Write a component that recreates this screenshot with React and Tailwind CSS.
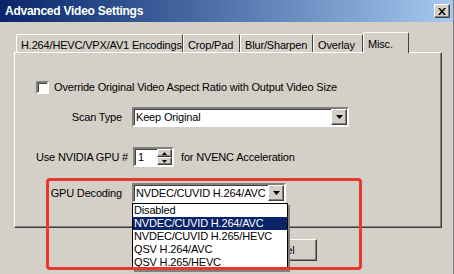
const raised =
  'border border-t-white border-l-white border-r-[#404040] border-b-[#404040] shadow-[inset_-1px_-1px_0_#808080]';
const sunken =
  'border-2 border-t-[#808080] border-l-[#808080] border-r-white border-b-white shadow-[inset_1px_1px_0_#404040]';

function DropArrow() {
  return (
    <div className={`flex h-[16px] w-[16px] flex-shrink-0 items-center justify-center bg-[#d4d0c8] ${raised}`}>
      <svg viewBox="0 0 7 4" className="h-[4px] w-[7px]">
        <path d="M0 0h7L3.5 4z" fill="#000" />
      </svg>
    </div>
  );
}

function Combo({ value, width }) {
  return (
    <div className={`flex h-[20px] items-center bg-white pl-[2px] ${sunken}`} style={{ width }}>
      <span className="flex-1 overflow-hidden whitespace-nowrap">{value}</span>
      <DropArrow />
    </div>
  );
}

function Tab({ label, width, active }) {
  return (
    <div
      className={
        'flex items-start whitespace-nowrap rounded-t-[2px] border-l border-t border-r border-l-white border-t-white border-r-[#404040] pl-[4px] ' +
        (active ? 'relative z-10 -mb-[1px] h-[21px] bg-[#d4d0c8] pt-[3px]' : 'h-[18px] pt-[2px]')
      }
      style={{ width }}
    >
      {label}
    </div>
  );
}

const items = [
  'Disabled',
  'NVDEC/CUVID H.264/AVC',
  'NVDEC/CUVID H.265/HEVC',
  'QSV H.264/AVC',
  'QSV H.265/HEVC',
];

export default function App() {
  return (
    <div className="relative h-[274px] w-[454px] overflow-hidden border-r border-r-[#808080] bg-[#d4d0c8] font-['Liberation_Sans',Arial,sans-serif] text-[11px] tracking-[-0.17px] text-black">
      {/* title bar */}
      <div className="flex h-[22px] items-center justify-between bg-gradient-to-r from-[#0a246a] to-[#a6caf0] pl-[5px] pr-[3px]">
        <span className="text-[12px] font-bold tracking-[-0.25px] text-white">Advanced Video Settings</span>
        <div className={`flex h-[14px] w-[16px] items-center justify-center bg-[#d4d0c8] ${raised}`}>
          <svg viewBox="0 0 8 7" className="h-[7px] w-[8px]">
            <path d="M0 0h2l2 2.5L6 0h2L5 3.5 8 7H6L4 4.5 2 7H0l3-3.5z" fill="#000" />
          </svg>
        </div>
      </div>

      {/* tabs */}
      <div className="ml-[16px] mt-[10px] flex h-[20px] items-end">
        <Tab label="H.264/HEVC/VPX/AV1 Encodings" width={167} />
        <Tab label="Crop/Pad" width={57} />
        <Tab label="Blur/Sharpen" width={73} />
        <Tab label="Overlay" width={50} />
        <Tab label="Misc." width={46} active />
      </div>

      {/* panel */}
      <div className="ml-[14px] flex h-[176px] w-[428px] flex-col border border-t-white border-l-white border-r-[#404040] border-b-[#404040] shadow-[inset_-1px_-1px_0_#808080]">
        <div className="ml-[21px] mt-[28px] flex h-[13px] items-center gap-[5px]">
          <div className={`h-[13px] w-[13px] bg-white ${sunken}`} />
          <span>Override Original Video Aspect Ratio with Output Video Size</span>
        </div>

        <div className="mt-[13px] flex items-center">
          <span className="w-[117px] pr-[10px] text-right">Scan Type</span>
          <Combo value="Keep Original" width={217} />
        </div>

        <div className="ml-[21px] mt-[20px] flex items-center">
          <span className="w-[97px]">Use NVIDIA GPU #</span>
          <div className={`flex h-[20px] w-[41px] items-center bg-white pl-[3px] ${sunken}`}>
            <span className="flex-1">1</span>
            <div className="flex h-[16px] w-[15px] flex-col">
              <div className={`flex h-[8px] items-center justify-center bg-[#d4d0c8] ${raised}`}>
                <svg viewBox="0 0 5 3" className="h-[3px] w-[5px]"><path d="M0 3h5L2.5 0z" fill="#000" /></svg>
              </div>
              <div className={`flex h-[8px] items-center justify-center bg-[#d4d0c8] ${raised}`}>
                <svg viewBox="0 0 5 3" className="h-[3px] w-[5px]"><path d="M0 0h5L2.5 3z" fill="#000" /></svg>
              </div>
            </div>
          </div>
          <span className="ml-[7px]">for NVENC Acceleration</span>
        </div>

        <div className="mt-[16px] flex items-center">
          <span className="w-[117px] pr-[10px] text-right">GPU Decoding</span>
          <Combo value="NVDEC/CUVID H.264/AVC" width={154} />
        </div>
      </div>

      {/* buttons below */}
      <div className="ml-[239px] mt-[11px] flex">
        <div className={`flex h-[22px] w-[78px] items-center justify-center ${raised}`}>Cancel</div>
      </div>

      {/* open dropdown list */}
      <div className="absolute left-[132px] top-[203px] w-[156px] border border-black bg-white shadow-[2px_2px_0_#808080]">
        {items.map((t, i) => (
          <div
            key={t}
            className={'h-[13px] whitespace-nowrap pl-[1px] leading-[13px] ' + (i === 1 ? 'bg-[#0a246a] text-white' : '')}
          >
            {t}
          </div>
        ))}
      </div>

      {/* red annotation */}
      <div className="pointer-events-none absolute left-[46px] top-[178px] h-[92px] w-[316px] rounded-[4px] border-[3px] border-[#e8382e]" />
    </div>
  );
}
